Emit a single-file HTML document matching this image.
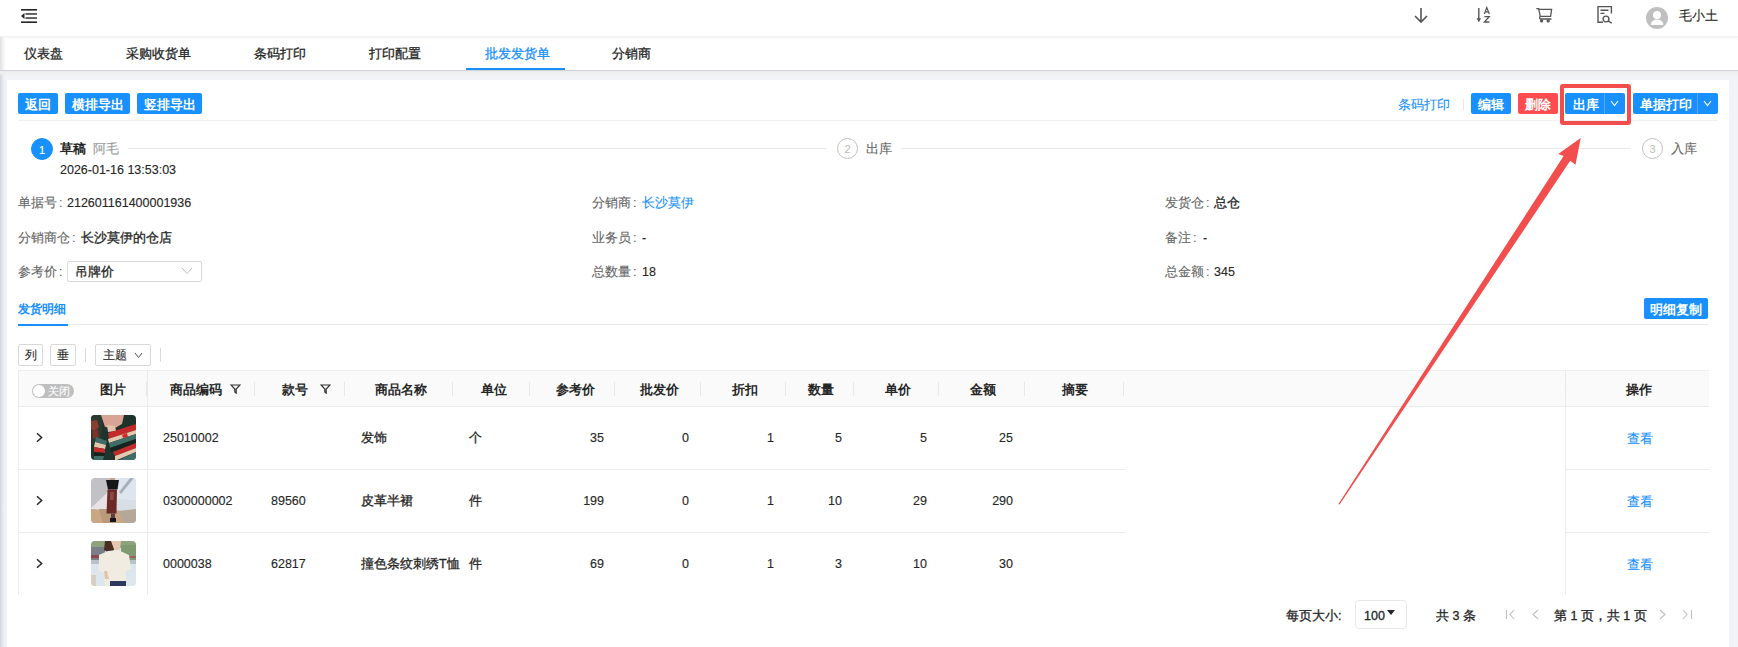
<!DOCTYPE html>
<html><head><meta charset="utf-8">
<style>
*{margin:0;padding:0;box-sizing:border-box}
html,body{width:1738px;height:647px;overflow:hidden;background:#f2f3f8;font-family:"Liberation Sans",sans-serif;font-size:12px;color:#262626;-webkit-text-stroke-width:0.12px}
.a{position:absolute;white-space:nowrap}
#hdr{position:absolute;left:0;top:0;width:1738px;height:36px;background:#fff}
#tabs{position:absolute;left:0;top:36px;width:1738px;height:34px;background:linear-gradient(#efefef,#f8f8f8 2px,#fdfdfd 3px,#fff 5px)}
#tabshadow{position:absolute;left:0;top:70px;width:1738px;height:6px;background:linear-gradient(#d3d3d5 0,#d3d3d5 1px,#e8eaed 1px,#eef0f3 3px,rgba(242,243,248,0))}
#lstrip{position:absolute;left:0;top:70px;width:6px;height:577px;background:linear-gradient(to right,#d3d6db,#eceef3 60%,#f2f3f8)}
#lstrip2{position:absolute;left:0;top:37px;width:6px;height:33px;background:linear-gradient(to right,#dfe1e4,#f4f5f6 60%,#fff)}
#card{position:absolute;left:7px;top:80px;width:1722px;height:567px;background:#fff}
.tab{position:absolute;top:46px;height:17px;line-height:17px;font-size:12.6px;color:#262626}
.btn{position:absolute;top:93px;height:21px;line-height:23px;background:#1890ff;color:#fff;font-weight:bold;font-size:13px;text-align:center;border-radius:2px}
.lbl{color:#666}
.row{position:absolute;height:16px;line-height:16px;font-size:12.5px;white-space:nowrap}
.th{position:absolute;top:382px;height:16px;line-height:16px;font-weight:bold;color:#262626;font-size:12.5px}
.sep{position:absolute;top:382px;width:1px;height:14px;background:#e8e8e8}
.td{position:absolute;height:16px;line-height:16px;color:#262626;font-size:12.5px;white-space:nowrap}
.r{text-align:right}
.hl{position:absolute;height:1px;background:#ebebeb}
.tbtn{position:absolute;top:344px;height:22px;line-height:20px;border:1px solid #d9d9d9;border-radius:2px;background:#fff;font-size:12px;color:#262626;text-align:center}
.step{position:absolute;top:137.5px;width:21px;height:21px;border-radius:50%;border:1px solid #bfbfbf;color:#bfbfbf;text-align:center;line-height:21px;font-size:11px}
.chev{position:absolute}
.btn,.th,.b0{-webkit-text-stroke-width:0}
.cj{-webkit-text-stroke-width:0.3px}
</style></head><body>
<div id="hdr"></div>
<div id="tabs"></div>
<div id="lstrip"></div>
<div id="lstrip2"></div>
<div id="tabshadow"></div>
<div id="card"></div>

<!-- header icons -->
<svg class="a" style="left:20px;top:8px" width="18" height="16" viewBox="0 0 18 16">
 <rect x="1" y="1" width="16" height="1.6" fill="#262626"/>
 <rect x="5.5" y="5.2" width="11.5" height="1.5" fill="#333"/>
 <rect x="5.5" y="9.3" width="11.5" height="1.5" fill="#333"/>
 <rect x="1" y="13.4" width="16" height="1.6" fill="#262626"/>
 <path d="M1 8 L4.5 5 L4.5 11 Z" fill="#262626"/>
</svg>

<svg class="a" style="left:1412px;top:6px" width="18" height="18" viewBox="0 0 18 18" fill="none" stroke="#555" stroke-width="1.6">
 <path d="M9 2 V16 M3 10 L9 16 L15 10"/>
</svg>
<svg class="a" style="left:1474px;top:6px" width="18" height="18" viewBox="0 0 18 18">
 <path d="M4.8 2 V15.5" fill="none" stroke="#555" stroke-width="1.4"/>
 <path d="M2.5 12.2 L4.8 16 L7.1 12.2 Z" fill="#555"/>
 <path d="M10.3 8 L12.8 1.6 L15.3 8 M11.2 5.8 H14.4" fill="none" stroke="#555" stroke-width="1.2"/>
 <path d="M10.4 10.6 H15.2 L10.4 16 H15.4" fill="none" stroke="#555" stroke-width="1.3"/>
</svg>
<svg class="a" style="left:1535px;top:7px" width="19" height="17" viewBox="0 0 19 17" fill="none" stroke="#555" stroke-width="1.3">
 <path d="M1.3 1.6 H3.6 L5.3 9.4 H15.6 L16.6 2.3 H4.2"/>
 <path d="M5.3 9.4 Q3.8 11.8 5.6 12 H16.5"/>
 <circle cx="6.6" cy="13.9" r="1" fill="#555"/><circle cx="13.2" cy="13.9" r="1" fill="#555"/>
</svg>
<svg class="a" style="left:1596px;top:5px" width="19" height="19" viewBox="0 0 19 19" fill="none" stroke="#555" stroke-width="1.4">
 <path d="M7 17.3 H2 V1.6 H15.4 V8.5"/>
 <path d="M4.5 5.3 H12.5 M4.5 8.4 H8.5"/>
 <circle cx="10" cy="14" r="2.9"/><path d="M12.2 16.2 L15.8 18.2"/>
</svg>
<svg class="a" style="left:1646px;top:7px" width="22" height="22" viewBox="0 0 22 22">
 <circle cx="11" cy="11" r="11" fill="#bfbfbf"/>
 <circle cx="11" cy="8" r="4" fill="#fff"/>
 <path d="M4.8 18 C4.8 10.5 17.4 10.5 17.4 18 Z" fill="#fff"/>
</svg>
<div class="a" style="left:1679px;top:8px;height:17px;line-height:17px;font-size:12.5px;color:#262626">毛小土</div>

<!-- tabs -->
<div class="tab cj" style="left:24px">仪表盘</div>
<div class="tab cj" style="left:126px">采购收货单</div>
<div class="tab cj" style="left:254px">条码打印</div>
<div class="tab cj" style="left:369px">打印配置</div>
<div class="tab cj" style="left:485px;color:#1890ff">批发发货单</div>
<div class="a" style="left:466px;top:68px;width:99px;height:2px;background:#1890ff"></div>
<div class="tab cj" style="left:612px">分销商</div>

<!-- action buttons -->
<div class="btn" style="left:18px;width:40px">返回</div>
<div class="btn" style="left:65px;width:65px">横排导出</div>
<div class="btn" style="left:137px;width:65px">竖排导出</div>

<div class="a" style="left:1398px;top:97px;height:16px;line-height:16px;color:#1890ff;font-size:12.5px">条码打印</div>
<div class="a" style="left:1463px;top:99px;width:1px;height:11px;background:#e8e8e8"></div>
<div class="btn" style="left:1471px;width:40px">编辑</div>
<div class="btn" style="left:1518px;width:40px;background:#ff4d4f">删除</div>
<div class="btn" style="left:1565px;width:60px;text-align:left;padding-left:8px">出库</div>
<div class="a" style="left:1604px;top:93px;width:1px;height:21px;background:#52aaff"></div>
<svg class="a" style="left:1610px;top:100px" width="9" height="7" viewBox="0 0 9 7" fill="none" stroke="#fff" stroke-width="1.1"><path d="M1 1 L4.5 5.5 L8 1"/></svg>
<div class="btn" style="left:1633px;width:85px;text-align:left;padding-left:7px">单据打印</div>
<div class="a" style="left:1697px;top:93px;width:1px;height:21px;background:#52aaff"></div>
<svg class="a" style="left:1703px;top:100px" width="9" height="7" viewBox="0 0 9 7" fill="none" stroke="#fff" stroke-width="1.1"><path d="M1 1 L4.5 5.5 L8 1"/></svg>

<div class="hl" style="left:18px;top:120px;width:1700px;background:#efefef"></div>

<!-- steps -->
<div class="step" style="left:31px;width:22px;height:22px;line-height:22px;background:#1890ff;border-color:#1890ff;color:#fff">1</div>
<div class="a" style="left:60px;top:140px;height:17px;line-height:17px;font-size:13px;font-weight:bold;-webkit-text-stroke-width:0;color:#262626">草稿</div>
<div class="a" style="left:93px;top:140px;height:17px;line-height:17px;font-size:13px;color:#999">阿毛</div>
<div class="hl" style="left:128px;top:148px;width:698px;background:#e8e8e8"></div>
<div class="a" style="left:60px;top:162px;height:16px;line-height:16px;font-size:12.5px;color:#262626">2026-01-16 13:53:03</div>
<div class="step" style="left:837px">2</div>
<div class="a" style="left:866px;top:141px;height:17px;line-height:17px;font-size:12.5px;color:#666">出库</div>
<div class="hl" style="left:901px;top:148px;width:730px;background:#e8e8e8"></div>
<div class="step" style="left:1642px">3</div>
<div class="a" style="left:1671px;top:141px;height:17px;line-height:17px;font-size:12.5px;color:#666">入库</div>

<!-- info -->
<div class="row lbl" style="left:18px;top:195px">单据号<span style="margin-left:2px">:</span></div><div class="row" style="left:67px;top:195px">212601161400001936</div>
<div class="row lbl" style="left:18px;top:230px">分销商仓<span style="margin-left:2px">:</span></div><div class="row cj" style="left:81px;top:230px">长沙莫伊的仓店</div>
<div class="row lbl" style="left:18px;top:264px">参考价<span style="margin-left:2px">:</span></div>
<div class="a" style="left:67px;top:261px;width:135px;height:21px;border:1px solid #d9d9d9;border-radius:2px;background:#fff"></div>
<div class="row cj" style="left:75px;top:264px">吊牌价</div>
<svg class="a" style="left:181px;top:267px" width="12" height="8" viewBox="0 0 12 8" fill="none" stroke="#bfbfbf" stroke-width="1"><path d="M1 1 L6 6.5 L11 1"/></svg>

<div class="row lbl" style="left:592px;top:195px">分销商<span style="margin-left:2px">:</span></div><div class="row" style="left:642px;top:195px;color:#1890ff">长沙莫伊</div>
<div class="row lbl" style="left:592px;top:230px">业务员<span style="margin-left:2px">:</span></div><div class="row" style="left:642px;top:230px">-</div>
<div class="row lbl" style="left:592px;top:264px">总数量<span style="margin-left:2px">:</span></div><div class="row" style="left:642px;top:264px">18</div>

<div class="row lbl" style="left:1165px;top:195px">发货仓<span style="margin-left:2px">:</span></div><div class="row cj" style="left:1214px;top:195px">总仓</div>
<div class="row lbl" style="left:1165px;top:230px">备注<span style="margin-left:2px">:</span></div><div class="row" style="left:1203px;top:230px">-</div>
<div class="row lbl" style="left:1165px;top:264px">总金额<span style="margin-left:2px">:</span></div><div class="row" style="left:1214px;top:264px">345</div>

<!-- detail tab -->
<div class="a" style="left:18px;top:301px;height:17px;line-height:17px;font-size:12.2px;font-weight:bold;-webkit-text-stroke-width:0;color:#1890ff">发货明细</div>
<div class="hl" style="left:18px;top:324px;width:1690px;background:#e8e8e8"></div>
<div class="a" style="left:18px;top:324px;width:50px;height:1.5px;background:#1890ff"></div>
<div class="btn" style="left:1644px;top:298px;width:64px">明细复制</div>

<!-- toolbar -->
<div class="tbtn" style="left:18px;width:25px">列</div>
<div class="tbtn" style="left:50px;width:26px">垂</div>
<div class="a" style="left:85px;top:348px;width:1px;height:14px;background:#d9d9d9"></div>
<div class="tbtn" style="left:95px;width:56px;text-align:left;padding-left:7px">主题</div>
<svg class="a" style="left:134px;top:352px" width="9" height="7" viewBox="0 0 9 7" fill="none" stroke="#555" stroke-width="1"><path d="M1 1 L4.5 5.5 L8 1"/></svg>
<div class="a" style="left:160px;top:348px;width:1px;height:14px;background:#d9d9d9"></div>

<!-- table -->
<div class="a" style="left:18px;top:370px;width:1691px;height:37px;background:#fafafa;border-top:1px solid #f0f0f0;border-bottom:1px solid #ebebeb"></div>
<div class="a" style="left:18px;top:370px;width:1px;height:225px;background:#ebebeb"></div>
<div class="a" style="left:147px;top:370px;width:1px;height:225px;background:#ebebeb"></div>
<div class="a" style="left:1565px;top:370px;width:1px;height:225px;background:#ebebeb"></div>

<div class="a" style="left:32px;top:384px;width:42px;height:14px;border-radius:7px;background:#bfbfbf"></div>
<div class="a" style="left:33px;top:385px;width:12px;height:12px;border-radius:50%;background:#fff"></div>
<div class="a" style="left:48px;top:384px;height:14px;line-height:14px;font-size:10.5px;color:#fff">关闭</div>

<div class="th" style="left:100px">图片</div>
<div class="sep" style="left:146px"></div>
<div class="th" style="left:170px">商品编码</div>
<svg class="a" style="left:230px;top:384px" width="11" height="10" viewBox="0 0 11 10" fill="none" stroke="#333" stroke-width="1.2"><path d="M1 1 H10 L6.2 5 V9.2 L4.8 8 V5 Z"/></svg>
<div class="sep" style="left:254px"></div>
<div class="th" style="left:282px">款号</div>
<svg class="a" style="left:320px;top:384px" width="11" height="10" viewBox="0 0 11 10" fill="none" stroke="#333" stroke-width="1.2"><path d="M1 1 H10 L6.2 5 V9.2 L4.8 8 V5 Z"/></svg>
<div class="sep" style="left:344px"></div>
<div class="th" style="left:375px">商品名称</div>
<div class="sep" style="left:452px"></div>
<div class="th" style="left:481px">单位</div>
<div class="sep" style="left:529px"></div>
<div class="th" style="left:556px">参考价</div>
<div class="sep" style="left:614px"></div>
<div class="th" style="left:640px">批发价</div>
<div class="sep" style="left:700px"></div>
<div class="th" style="left:732px">折扣</div>
<div class="sep" style="left:785px"></div>
<div class="th" style="left:808px">数量</div>
<div class="sep" style="left:853px"></div>
<div class="th" style="left:885px">单价</div>
<div class="sep" style="left:938px"></div>
<div class="th" style="left:970px">金额</div>
<div class="sep" style="left:1024px"></div>
<div class="th" style="left:1062px">摘要</div>
<div class="sep" style="left:1123px"></div>
<div class="sep" style="left:1565px"></div>
<div class="th" style="left:1626px">操作</div>

<!-- row lines -->
<div class="hl" style="left:18px;top:469px;width:1107px"></div>
<div class="hl" style="left:1565px;top:469px;width:144px"></div>
<div class="hl" style="left:18px;top:532px;width:1107px"></div>
<div class="hl" style="left:1565px;top:532px;width:144px"></div>

<!--ROWS-->
<svg class="a" style="left:35px;top:431.0px" width="9" height="13" viewBox="0 0 9 13" fill="none" stroke="#262626" stroke-width="1.5"><path d="M2 2.3 L6.6 6.5 L2 10.7"/></svg>
<svg class="a" style="left:91px;top:415px" width="45" height="45" viewBox="0 0 45 45"><defs><clipPath id="c1"><rect width="45" height="45" rx="4"/></clipPath></defs><g clip-path="url(#c1)">
<rect width="45" height="45" fill="#1e332b"/>
<path d="M0 0 H12 L10 25 L0 30 Z" fill="#2a3a30"/>
<path d="M0 6 L6 5 L8 12 L3 16 L0 14 Z" fill="#8a3f2e"/>
<path d="M1 16 L7 14 L8 22 L2 24 Z" fill="#7a3426"/>
<path d="M10 0 H33 L31 9 L24 13 L14 12 Z" fill="#d9a493"/>
<path d="M16 10 L24 11 L25 16 L17 17 Z" fill="#e6c2ad"/>
<path d="M17 18 L45 9 L45 15 L18 24 Z" fill="#c42a2a"/>
<path d="M17 24 L45 15 L45 19 L18 28 Z" fill="#e3c7ae"/>
<path d="M18 28 L45 19 L45 24 L19 33 Z" fill="#3f6e68"/>
<path d="M19 33 L45 24 L45 28 L20 37 Z" fill="#16241f"/>
<path d="M22 37 L45 28 L45 33 L24 41 Z" fill="#c42a2a"/>
<path d="M24 41 L45 33 L45 37 L26 45 H24 Z" fill="#e3c7ae"/>
<path d="M28 45 L45 37 V45 Z" fill="#3f6e68"/>
<path d="M5 22 L16 26 L15 30 L4 27 Z" fill="#3f6e68"/>
<path d="M4 27 L15 30 L14 34 L3 32 Z" fill="#e3c7ae"/>
<path d="M3 32 L14 34 L14 38 L3 37 Z" fill="#c42a2a"/>
<path d="M3 37 L14 38 L13 41 L3 41 Z" fill="#16241f"/>
<path d="M3 41 L13 41 L12 45 H3 Z" fill="#3f6e68"/>
<path d="M31 20 L36 18 L37 22 L32 23 Z" fill="#d52a2a"/>
</g></svg>
<div class="td" style="left:163px;top:429.5px">25010002</div>
<div class="td cj" style="left:361px;top:429.5px">发饰</div>
<div class="td cj" style="left:469px;top:429.5px">个</div>
<div class="td r" style="left:544px;width:60px;top:429.5px">35</div>
<div class="td r" style="left:629px;width:60px;top:429.5px">0</div>
<div class="td r" style="left:714px;width:60px;top:429.5px">1</div>
<div class="td r" style="left:782px;width:60px;top:429.5px">5</div>
<div class="td r" style="left:867px;width:60px;top:429.5px">5</div>
<div class="td r" style="left:953px;width:60px;top:429.5px">25</div>
<div class="td" style="left:1627px;top:430.5px;color:#1890ff">查看</div>
<svg class="a" style="left:35px;top:494.0px" width="9" height="13" viewBox="0 0 9 13" fill="none" stroke="#262626" stroke-width="1.5"><path d="M2 2.3 L6.6 6.5 L2 10.7"/></svg>
<svg class="a" style="left:91px;top:478px" width="45" height="45" viewBox="0 0 45 45"><defs><clipPath id="c2"><rect width="45" height="45" rx="4"/></clipPath></defs><g clip-path="url(#c2)">
<rect width="45" height="45" fill="#c2c1c6"/>
<path d="M24 0 H45 V34 L24 32 Z" fill="#dfe5ee"/>
<path d="M39 0 H43 L30 16 L28 14 Z" fill="#a9aebb"/>
<path d="M26 21 L45 22 V34 L26 32 Z" fill="#d9dde5"/>
<path d="M0 30 L19 12 L20 31 L0 34 Z" fill="#e6e1e4"/>
<path d="M0 31 L30 33 L33 45 H0 Z" fill="#c9a684"/>
<path d="M8 31 L20 31 L24 45 H12 Z" fill="#b99a7c"/>
<path d="M28 33 L45 31 V45 H32 Z" fill="#b5a898"/>
<path d="M19 0 H24 V3 H19 Z" fill="#c7a08e"/>
<path d="M15 2 H28 L26.5 11.5 H17 Z" fill="#161616"/>
<path d="M16.5 11.5 H26 L25.5 35.5 H15.5 Z" fill="#6c2a27"/>
<path d="M19 14 L23 14 L22.5 22 L19 22 Z" fill="#8a4a42"/>
<path d="M20 35.5 H24 V41 H20 Z" fill="#5a403a"/>
<path d="M19 40 H25 V44 H19 Z" fill="#151515"/>
</g></svg>
<div class="td" style="left:163px;top:492.5px">0300000002</div>
<div class="td" style="left:271px;top:492.5px">89560</div>
<div class="td cj" style="left:361px;top:492.5px">皮革半裙</div>
<div class="td cj" style="left:469px;top:492.5px">件</div>
<div class="td r" style="left:544px;width:60px;top:492.5px">199</div>
<div class="td r" style="left:629px;width:60px;top:492.5px">0</div>
<div class="td r" style="left:714px;width:60px;top:492.5px">1</div>
<div class="td r" style="left:782px;width:60px;top:492.5px">10</div>
<div class="td r" style="left:867px;width:60px;top:492.5px">29</div>
<div class="td r" style="left:953px;width:60px;top:492.5px">290</div>
<div class="td" style="left:1627px;top:493.5px;color:#1890ff">查看</div>
<svg class="a" style="left:35px;top:557.0px" width="9" height="13" viewBox="0 0 9 13" fill="none" stroke="#262626" stroke-width="1.5"><path d="M2 2.3 L6.6 6.5 L2 10.7"/></svg>
<svg class="a" style="left:91px;top:541px" width="45" height="45" viewBox="0 0 45 45"><defs><clipPath id="c3"><rect width="45" height="45" rx="4"/></clipPath></defs><g clip-path="url(#c3)">
<rect width="45" height="45" fill="#dde6ec"/>
<rect width="45" height="7" fill="#8ea27c"/>
<rect y="6" width="14" height="14" fill="#7a7f88"/>
<rect x="30" y="4" width="15" height="16" fill="#7e9a70"/>
<rect y="14" width="12" height="3" fill="#8e4a4a"/>
<rect x="38" y="15" width="7" height="2" fill="#a06060"/>
<rect y="19" width="45" height="4" fill="#b9c2c8"/>
<path d="M14 0 H24 L23 9 L18 12 L13 9 Z" fill="#4a2e22"/>
<path d="M20 0 H30 L29 8 L24 11 Z" fill="#e8c7b2"/>
<path d="M8 14 L17 10 L27 9 L38 14 L40 28 L35 30 L35 45 H14 L13 32 L8 30 Z" fill="#f1ece1"/>
<path d="M13 30 L16 30 L18 38 L14 38 Z" fill="#e0c4ae"/>
<path d="M19 40 H35 V45 H19 Z" fill="#2a3a5c"/>
<path d="M0 34 H5 V45 H0 Z" fill="#d8cfc2"/>
</g></svg>
<div class="td" style="left:163px;top:555.5px">0000038</div>
<div class="td" style="left:271px;top:555.5px">62817</div>
<div class="td cj" style="left:361px;top:555.5px">撞色条纹刺绣T恤</div>
<div class="td cj" style="left:469px;top:555.5px">件</div>
<div class="td r" style="left:544px;width:60px;top:555.5px">69</div>
<div class="td r" style="left:629px;width:60px;top:555.5px">0</div>
<div class="td r" style="left:714px;width:60px;top:555.5px">1</div>
<div class="td r" style="left:782px;width:60px;top:555.5px">3</div>
<div class="td r" style="left:867px;width:60px;top:555.5px">10</div>
<div class="td r" style="left:953px;width:60px;top:555.5px">30</div>
<div class="td" style="left:1627px;top:556.5px;color:#1890ff">查看</div>
<!--/ROWS-->

<!-- pagination -->
<div class="a cj" style="left:1286px;top:608px;height:16px;line-height:16px;font-size:12.5px;color:#262626">每页大小:</div>
<div class="a cj" style="left:1355px;top:600px;width:52px;height:29px;border:1px solid #e8e8e8;border-radius:4px;background:#fff"></div>
<div class="a cj" style="left:1364px;top:608px;height:16px;line-height:16px;font-size:12.5px;color:#262626">100</div>
<svg class="a" style="left:1387px;top:610px" width="8" height="6" viewBox="0 0 8 6"><path d="M0 0 H8 L4 5 Z" fill="#262626"/></svg>
<div class="a cj" style="left:1436px;top:608px;height:16px;line-height:16px;font-size:12.5px;color:#262626">共 3 条</div>
<svg class="a" style="left:1505px;top:609px" width="12" height="11" viewBox="0 0 12 11" fill="none" stroke="#bfbfbf" stroke-width="1.1"><path d="M1.5 1 V10 M9 1 L5 5.5 L9 10"/></svg>
<svg class="a" style="left:1530px;top:609px" width="10" height="11" viewBox="0 0 10 11" fill="none" stroke="#bfbfbf" stroke-width="1.1"><path d="M8 1 L3 5.5 L8 10"/></svg>
<div class="a cj" style="left:1554px;top:608px;height:16px;line-height:16px;font-size:12.5px;color:#262626">第 1 页，共 1 页</div>
<svg class="a" style="left:1658px;top:609px" width="10" height="11" viewBox="0 0 10 11" fill="none" stroke="#bfbfbf" stroke-width="1.1"><path d="M2 1 L7 5.5 L2 10"/></svg>
<svg class="a" style="left:1682px;top:609px" width="12" height="11" viewBox="0 0 12 11" fill="none" stroke="#bfbfbf" stroke-width="1.1"><path d="M1 1 L5 5.5 L1 10 M9.5 1 V10"/></svg>

<!-- annotation -->
<div class="a" style="left:1560px;top:84px;width:71px;height:41px;border:4px solid #f24e4e;border-radius:3px"></div>
<svg class="a" style="left:0;top:0" width="1738" height="647" viewBox="0 0 1738 647">
 <path d="M1580.7 137.9 L1575.5 164.7 L1570.2 160.8 L1339.6 504.6 L1338.4 504 L1563.6 156.1 L1558.2 154 Z" fill="#f24e4e"/>
</svg>
</body></html>
